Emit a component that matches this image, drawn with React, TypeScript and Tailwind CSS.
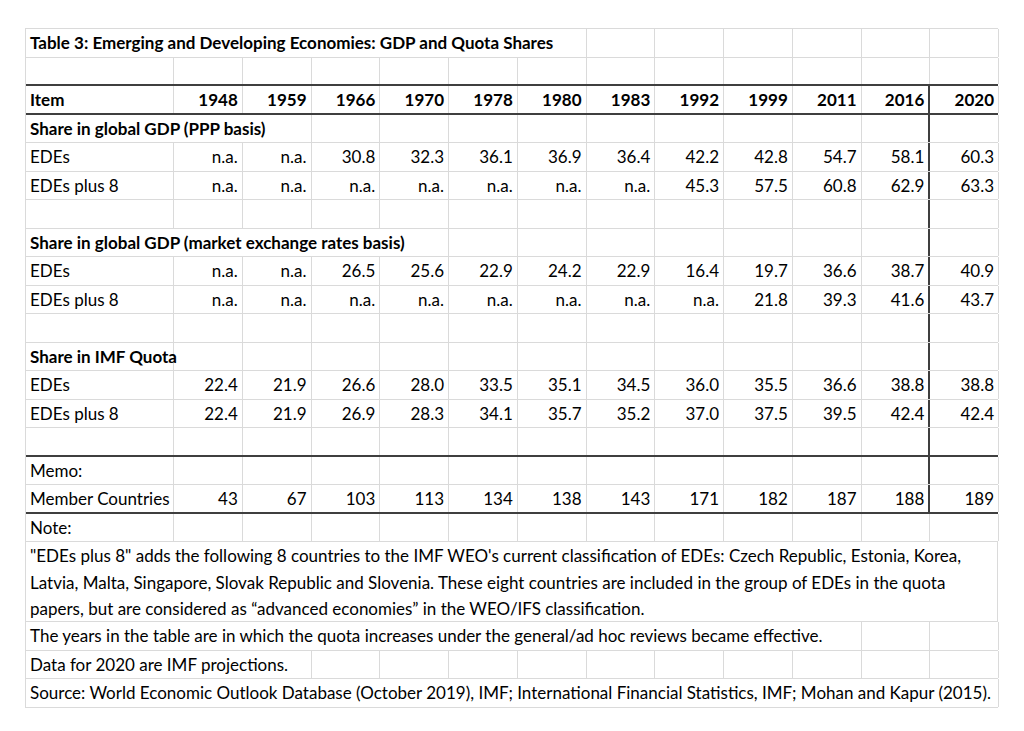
import React from "react";

type Cell = {
  text?: string;
  span?: number;
  bold?: boolean;
  left?: boolean;
};

type Row = {
  cells: Cell[];
  bottom?: "thin" | "thick";
  thickCol?: boolean;
};

const YEARS = ["1948", "1959", "1966", "1970", "1978", "1980", "1983", "1992", "1999", "2011", "2016", "2020"];

const SPAN: Record<number, string> = {
  1: "",
  3: "col-span-3",
  5: "col-span-5",
  7: "col-span-7",
  11: "col-span-11",
  13: "col-span-13",
};

function blanks(n: number): Cell[] {
  return Array.from({ length: n }, () => ({}));
}

function dataRow(label: string, values: string[], opts: Partial<Row> = {}): Row {
  return {
    cells: [{ text: label, left: true }, ...values.map((v) => ({ text: v }))],
    thickCol: true,
    ...opts,
  };
}

function spanRow(text: string, span: number, bold = false, thickCol = false): Row {
  return {
    cells: [{ text, span, left: true, bold }, ...blanks(13 - span)],
    thickCol,
  };
}

const rows: Row[] = [
  spanRow("Table 3: Emerging and Developing Economies: GDP and Quota Shares", 7, true),
  { cells: blanks(13), bottom: "thick" },
  {
    cells: [{ text: "Item", left: true, bold: true }, ...YEARS.map((y) => ({ text: y, bold: true }))],
    bottom: "thick",
    thickCol: true,
  },
  spanRow("Share in global GDP (PPP basis)", 3, true, true),
  dataRow("EDEs", ["n.a.", "n.a.", "30.8", "32.3", "36.1", "36.9", "36.4", "42.2", "42.8", "54.7", "58.1", "60.3"]),
  dataRow("EDEs plus 8", ["n.a.", "n.a.", "n.a.", "n.a.", "n.a.", "n.a.", "n.a.", "45.3", "57.5", "60.8", "62.9", "63.3"]),
  { cells: blanks(13), thickCol: true },
  spanRow("Share in global GDP (market exchange rates basis)", 5, true, true),
  dataRow("EDEs", ["n.a.", "n.a.", "26.5", "25.6", "22.9", "24.2", "22.9", "16.4", "19.7", "36.6", "38.7", "40.9"]),
  dataRow("EDEs plus 8", ["n.a.", "n.a.", "n.a.", "n.a.", "n.a.", "n.a.", "n.a.", "n.a.", "21.8", "39.3", "41.6", "43.7"]),
  { cells: blanks(13), thickCol: true },
  { cells: [{ text: "Share in IMF Quota", left: true, bold: true }, ...blanks(12)], thickCol: true },
  dataRow("EDEs", ["22.4", "21.9", "26.6", "28.0", "33.5", "35.1", "34.5", "36.0", "35.5", "36.6", "38.8", "38.8"]),
  dataRow("EDEs plus 8", ["22.4", "21.9", "26.9", "28.3", "34.1", "35.7", "35.2", "37.0", "37.5", "39.5", "42.4", "42.4"]),
  { cells: blanks(13), thickCol: true, bottom: "thick" },
  { cells: [{ text: "Memo:", left: true }, ...blanks(12)], thickCol: true },
  dataRow("Member Countries", ["43", "67", "103", "113", "134", "138", "143", "171", "182", "187", "188", "189"], {
    bottom: "thick",
  }),
  { cells: [{ text: "Note:", left: true }, ...blanks(12)] },
];

const tailRows: Row[] = [
  spanRow("The years in the table are in which the quota increases under the general/ad hoc reviews became effective.", 11),
  spanRow("Data for 2020 are IMF projections.", 3),
  spanRow(
    "Source: World Economic Outlook Database (October 2019), IMF; International Financial Statistics, IMF; Mohan and Kapur (2015).",
    13
  ),
];

function SheetRow({ row }: { row: Row }) {
  let col = 0;
  return (
    <div
      className={
        "grid h-[28.5px] grid-cols-[148px_repeat(12,68.75px)] " +
        (row.bottom === "thick" ? "border-b-2 border-b-[#3f3f3f]" : "border-b border-b-[#dadada]")
      }
    >
      {row.cells.map((c, i) => {
        const span = c.span ?? 1;
        col += span;
        const thick = row.thickCol && col === 12;
        return (
          <div
            key={i}
            className={
              "whitespace-nowrap leading-[27px] " +
              SPAN[span] +
              (thick ? " border-r-2 border-r-[#3f3f3f]" : " border-r border-r-[#dadada]") +
              (c.left ? " pl-[4px] text-left" : " pr-[4px] text-right") +
              (c.bold ? " font-bold" : "")
            }
          >
            {c.text}
          </div>
        );
      })}
    </div>
  );
}

export default function App() {
  return (
    <div className="h-[731px] w-[1024px] bg-white pl-[25px] pt-[28px] text-[17px] text-black [font-family:Lato,'Open_Sans',sans-serif]">
      <div className="w-[973px] border-l border-t border-[#dadada]">
        {rows.map((r, i) => (
          <SheetRow key={i} row={r} />
        ))}
        <div className="h-[80px] border-b border-r border-[#dadada] pl-[4px] pt-[1px] leading-[26.5px] whitespace-nowrap">
          <div>
            "EDEs plus 8" adds the following 8 countries to the IMF WEO's current classification of EDEs: Czech Republic, Estonia, Korea,
          </div>
          <div>
            Latvia, Malta, Singapore, Slovak Republic and Slovenia. These eight countries are included in the group of EDEs in the quota
          </div>
          <div>papers, but are considered as “advanced economies” in the WEO/IFS classification.</div>
        </div>
        {tailRows.map((r, i) => (
          <SheetRow key={i} row={r} />
        ))}
      </div>
    </div>
  );
}
